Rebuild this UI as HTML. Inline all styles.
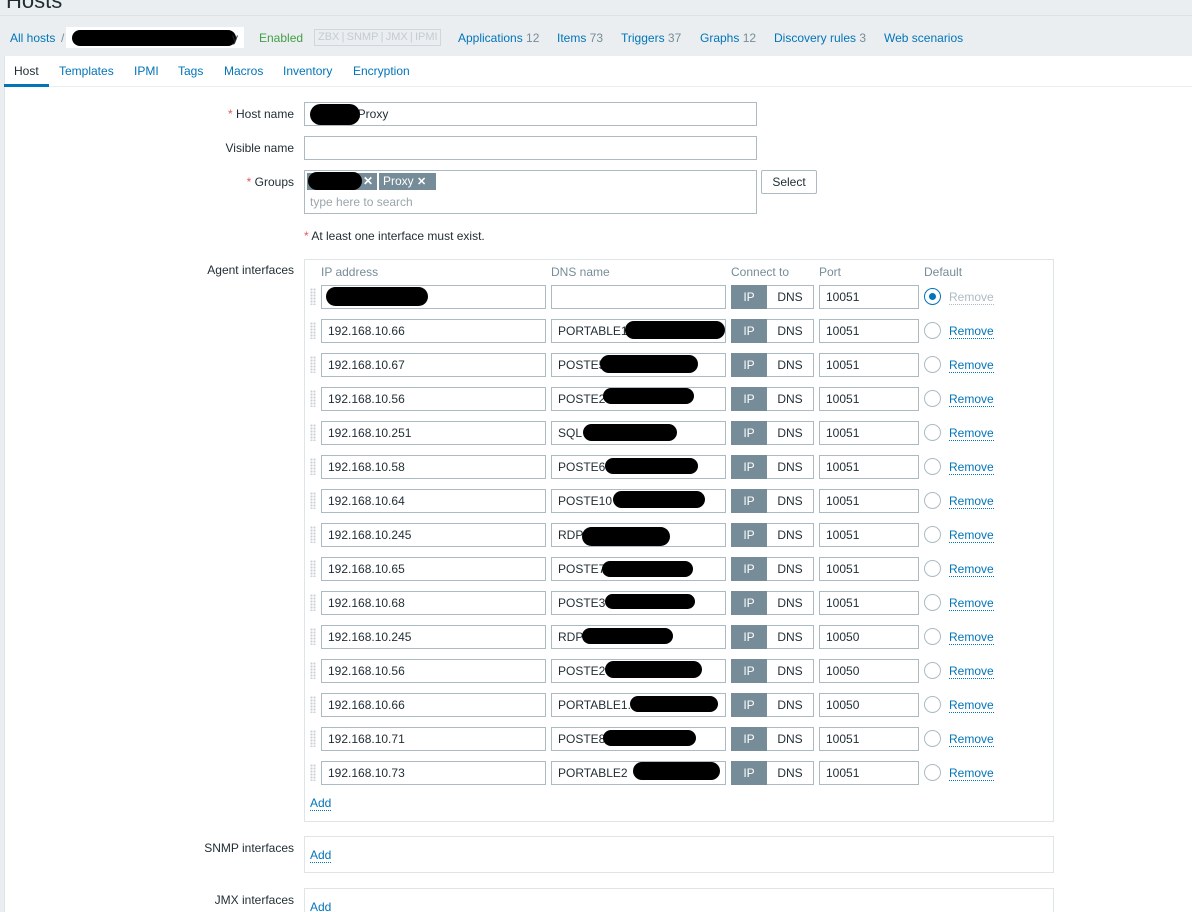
<!DOCTYPE html>
<html style="width:1192px;height:912px;overflow:hidden"><head><meta charset="utf-8"><style>
*{box-sizing:border-box;margin:0;padding:0}
body{width:1192px;height:912px;overflow:hidden;background:#ebeef0;font-family:"Liberation Sans",Arial,sans-serif;font-size:12px;color:#1f2c33;position:relative}
.a{position:absolute;white-space:nowrap}
.lnk{color:#0275b8}
.cnt{color:#768d99}
.in{position:absolute;height:24px;border:1px solid #acbbc2;background:#fff;padding:0 6px;line-height:22px}
.blob{position:absolute;background:#000;border-radius:12px}
.lbl{position:absolute;text-align:right;width:294px;left:0;white-space:nowrap}
.req{color:#e45959}
.tog{position:absolute;height:24px;width:83px;border:1px solid #acbbc2;background:#fff}
.tog .ip{position:absolute;left:-1px;top:-1px;width:36px;height:24px;background:#768d99;color:#fff;text-align:center;line-height:24px}
.tog .dn{position:absolute;left:35px;top:0;width:46px;text-align:center;line-height:22px}
.rad{position:absolute;width:17px;height:17px;border:1px solid #acbbc2;border-radius:50%;background:#fff}
.rm{position:absolute;color:#0275b8;border-bottom:1px dotted #0275b8;line-height:14px}
.drag{position:absolute;width:6px;height:17px;background-image:radial-gradient(circle,#c8d0d5 1px,transparent 1.2px);background-size:3px 3px}
.box{position:absolute;border:1px solid #dfe4e7;background:#fff}
</style></head><body>
<div class="a" style="left:6px;top:-12px;font-size:22px;color:#1f2c33">Hosts</div>
<div class="a" style="left:0;top:15px;width:1192px;height:1px;background:#dde2e5"></div>
<div class="a lnk" style="left:10px;top:31px">All hosts</div>
<div class="a" style="left:61px;top:31px;color:#768d99">/</div>
<div class="a" style="left:66px;top:27px;width:178px;height:21px;background:#fff"></div>
<div class="blob" style="left:72px;top:30px;width:164px;height:16px"></div>
<div class="a" style="left:232px;top:31px">y</div>
<div class="a" style="left:259px;top:31px;color:#429e47">Enabled</div>
<div class="a" style="left:314px;top:29px;width:127px;height:17px;border:1px solid #d0d6d9;color:#c3ccd1;font-size:11px;line-height:15px;padding-left:3px;word-spacing:2px">ZBX&#8201;|&#8201;SNMP&#8201;|&#8201;JMX&#8201;|&#8201;IPMI</div>
<div class="a lnk" style="left:458px;top:31px">Applications <span class="cnt">12</span></div>
<div class="a lnk" style="left:557px;top:31px">Items <span class="cnt">73</span></div>
<div class="a lnk" style="left:621px;top:31px">Triggers <span class="cnt">37</span></div>
<div class="a lnk" style="left:700px;top:31px">Graphs <span class="cnt">12</span></div>
<div class="a lnk" style="left:774px;top:31px">Discovery rules <span class="cnt">3</span></div>
<div class="a lnk" style="left:884px;top:31px">Web scenarios</div>

<div class="a" style="left:4px;top:56px;width:1188px;height:856px;background:#fff;border-left:1px solid #dfe4e7"></div>
<div class="a" style="left:4px;top:86px;width:1188px;height:1px;background:#ebeef0"></div>
<div class="a" style="left:14px;top:64px">Host</div>
<div class="a" style="left:4px;top:84px;width:45px;height:3px;background:#0275b8"></div>
<div class="a lnk" style="left:59px;top:64px">Templates</div>
<div class="a lnk" style="left:134px;top:64px">IPMI</div>
<div class="a lnk" style="left:178px;top:64px">Tags</div>
<div class="a lnk" style="left:224px;top:64px">Macros</div>
<div class="a lnk" style="left:283px;top:64px">Inventory</div>
<div class="a lnk" style="left:353px;top:64px">Encryption</div>

<div class="lbl" style="top:107px"><span class="req">*</span> Host name</div>
<div class="in" style="left:304px;top:102px;width:453px">&nbsp;&nbsp;&nbsp;&nbsp;&nbsp;&nbsp;&nbsp;&nbsp;&nbsp;&nbsp;&nbsp;&nbsp;&nbsp;&nbsp;Proxy</div>
<div class="blob" style="left:310px;top:104px;width:50px;height:21px"></div>
<div class="lbl" style="top:141px">Visible name</div>
<div class="in" style="left:304px;top:136px;width:453px"></div>
<div class="lbl" style="top:175px"><span class="req">*</span> Groups</div>
<div class="in" style="left:304px;top:170px;width:453px;height:44px"></div>
<div class="a" style="left:307px;top:173px;width:70px;height:17px;background:#768d99"></div>
<div class="blob" style="left:308px;top:172px;width:54px;height:18px"></div>
<div class="a" style="left:363px;top:174px;color:#fff;font-weight:bold">✕</div>
<div class="a" style="left:379px;top:173px;width:57px;height:17px;background:#768d99;color:#fff;line-height:17px;padding-left:4px">Proxy <b style="font-size:11px">✕</b></div>
<div class="a" style="left:310px;top:195px;color:#9aa6ac">type here to search</div>
<div class="a" style="left:761px;top:170px;width:56px;height:24px;border:1px solid #acbbc2;border-radius:2px;text-align:center;line-height:22px">Select</div>
<div class="a" style="left:304px;top:229px"><span class="req">*</span> At least one interface must exist.</div>

<div class="lbl" style="top:263px">Agent interfaces</div>
<div class="box" style="left:304px;top:259px;width:750px;height:563px"></div>
<div class="a" style="left:321px;top:265px;color:#768d99">IP address</div>
<div class="a" style="left:551px;top:265px;color:#768d99">DNS name</div>
<div class="a" style="left:731px;top:265px;color:#768d99">Connect to</div>
<div class="a" style="left:819px;top:265px;color:#768d99">Port</div>
<div class="a" style="left:924px;top:265px;color:#768d99">Default</div>

<div class="drag" style="left:310px;top:288px"></div><div class="in" style="left:321px;top:285px;width:225px"></div><div class="blob" style="left:326px;top:287px;width:102px;height:19px"></div><div class="in" style="left:551px;top:285px;width:175px"></div><div class="tog" style="left:731px;top:285px"><div class="ip">IP</div><div class="dn">DNS</div></div><div class="in" style="left:819px;top:285px;width:100px">10051</div><div class="rad" style="left:924px;top:288px;border-color:#0275b8"><div style="position:absolute;left:4px;top:4px;width:7px;height:7px;border-radius:50%;background:#0275b8"></div></div><div class="rm" style="left:949px;top:290px;color:#acbbc2;border-color:#acbbc2">Remove</div>

<div class="drag" style="left:310px;top:322px"></div><div class="in" style="left:321px;top:319px;width:225px">192.168.10.66</div><div class="in" style="left:551px;top:319px;width:175px">PORTABLE1</div><div class="blob" style="left:625px;top:321px;width:100px;height:18px"></div><div class="tog" style="left:731px;top:319px"><div class="ip">IP</div><div class="dn">DNS</div></div><div class="in" style="left:819px;top:319px;width:100px">10051</div><div class="rad" style="left:924px;top:322px"></div><div class="rm" style="left:949px;top:324px">Remove</div>

<div class="drag" style="left:310px;top:356px"></div><div class="in" style="left:321px;top:353px;width:225px">192.168.10.67</div><div class="in" style="left:551px;top:353px;width:175px">POSTE5</div><div class="blob" style="left:600px;top:355px;width:98px;height:18px"></div><div class="tog" style="left:731px;top:353px"><div class="ip">IP</div><div class="dn">DNS</div></div><div class="in" style="left:819px;top:353px;width:100px">10051</div><div class="rad" style="left:924px;top:356px"></div><div class="rm" style="left:949px;top:358px">Remove</div>

<div class="drag" style="left:310px;top:390px"></div><div class="in" style="left:321px;top:387px;width:225px">192.168.10.56</div><div class="in" style="left:551px;top:387px;width:175px">POSTE2</div><div class="blob" style="left:603px;top:388px;width:91px;height:16px"></div><div class="tog" style="left:731px;top:387px"><div class="ip">IP</div><div class="dn">DNS</div></div><div class="in" style="left:819px;top:387px;width:100px">10051</div><div class="rad" style="left:924px;top:390px"></div><div class="rm" style="left:949px;top:392px">Remove</div>

<div class="drag" style="left:310px;top:424px"></div><div class="in" style="left:321px;top:421px;width:225px">192.168.10.251</div><div class="in" style="left:551px;top:421px;width:175px">SQL</div><div class="blob" style="left:583px;top:424px;width:94px;height:17px"></div><div class="tog" style="left:731px;top:421px"><div class="ip">IP</div><div class="dn">DNS</div></div><div class="in" style="left:819px;top:421px;width:100px">10051</div><div class="rad" style="left:924px;top:424px"></div><div class="rm" style="left:949px;top:426px">Remove</div>

<div class="drag" style="left:310px;top:458px"></div><div class="in" style="left:321px;top:455px;width:225px">192.168.10.58</div><div class="in" style="left:551px;top:455px;width:175px">POSTE6</div><div class="blob" style="left:605px;top:458px;width:93px;height:16px"></div><div class="tog" style="left:731px;top:455px"><div class="ip">IP</div><div class="dn">DNS</div></div><div class="in" style="left:819px;top:455px;width:100px">10051</div><div class="rad" style="left:924px;top:458px"></div><div class="rm" style="left:949px;top:460px">Remove</div>

<div class="drag" style="left:310px;top:492px"></div><div class="in" style="left:321px;top:489px;width:225px">192.168.10.64</div><div class="in" style="left:551px;top:489px;width:175px">POSTE10</div><div class="blob" style="left:613px;top:491px;width:92px;height:17px"></div><div class="tog" style="left:731px;top:489px"><div class="ip">IP</div><div class="dn">DNS</div></div><div class="in" style="left:819px;top:489px;width:100px">10051</div><div class="rad" style="left:924px;top:492px"></div><div class="rm" style="left:949px;top:494px">Remove</div>

<div class="drag" style="left:310px;top:526px"></div><div class="in" style="left:321px;top:523px;width:225px">192.168.10.245</div><div class="in" style="left:551px;top:523px;width:175px">RDP</div><div class="blob" style="left:582px;top:527px;width:88px;height:19px"></div><div class="tog" style="left:731px;top:523px"><div class="ip">IP</div><div class="dn">DNS</div></div><div class="in" style="left:819px;top:523px;width:100px">10051</div><div class="rad" style="left:924px;top:526px"></div><div class="rm" style="left:949px;top:528px">Remove</div>

<div class="drag" style="left:310px;top:560px"></div><div class="in" style="left:321px;top:557px;width:225px">192.168.10.65</div><div class="in" style="left:551px;top:557px;width:175px">POSTE7</div><div class="blob" style="left:602px;top:561px;width:91px;height:16px"></div><div class="tog" style="left:731px;top:557px"><div class="ip">IP</div><div class="dn">DNS</div></div><div class="in" style="left:819px;top:557px;width:100px">10051</div><div class="rad" style="left:924px;top:560px"></div><div class="rm" style="left:949px;top:562px">Remove</div>

<div class="drag" style="left:310px;top:594px"></div><div class="in" style="left:321px;top:591px;width:225px">192.168.10.68</div><div class="in" style="left:551px;top:591px;width:175px">POSTE3</div><div class="blob" style="left:605px;top:594px;width:90px;height:15px"></div><div class="tog" style="left:731px;top:591px"><div class="ip">IP</div><div class="dn">DNS</div></div><div class="in" style="left:819px;top:591px;width:100px">10051</div><div class="rad" style="left:924px;top:594px"></div><div class="rm" style="left:949px;top:596px">Remove</div>

<div class="drag" style="left:310px;top:628px"></div><div class="in" style="left:321px;top:625px;width:225px">192.168.10.245</div><div class="in" style="left:551px;top:625px;width:175px">RDP</div><div class="blob" style="left:582px;top:628px;width:91px;height:16px"></div><div class="tog" style="left:731px;top:625px"><div class="ip">IP</div><div class="dn">DNS</div></div><div class="in" style="left:819px;top:625px;width:100px">10050</div><div class="rad" style="left:924px;top:628px"></div><div class="rm" style="left:949px;top:630px">Remove</div>

<div class="drag" style="left:310px;top:662px"></div><div class="in" style="left:321px;top:659px;width:225px">192.168.10.56</div><div class="in" style="left:551px;top:659px;width:175px">POSTE2</div><div class="blob" style="left:605px;top:661px;width:97px;height:17px"></div><div class="tog" style="left:731px;top:659px"><div class="ip">IP</div><div class="dn">DNS</div></div><div class="in" style="left:819px;top:659px;width:100px">10050</div><div class="rad" style="left:924px;top:662px"></div><div class="rm" style="left:949px;top:664px">Remove</div>

<div class="drag" style="left:310px;top:696px"></div><div class="in" style="left:321px;top:693px;width:225px">192.168.10.66</div><div class="in" style="left:551px;top:693px;width:175px">PORTABLE1.</div><div class="blob" style="left:630px;top:696px;width:88px;height:16px"></div><div class="tog" style="left:731px;top:693px"><div class="ip">IP</div><div class="dn">DNS</div></div><div class="in" style="left:819px;top:693px;width:100px">10050</div><div class="rad" style="left:924px;top:696px"></div><div class="rm" style="left:949px;top:698px">Remove</div>

<div class="drag" style="left:310px;top:730px"></div><div class="in" style="left:321px;top:727px;width:225px">192.168.10.71</div><div class="in" style="left:551px;top:727px;width:175px">POSTE8</div><div class="blob" style="left:603px;top:730px;width:93px;height:16px"></div><div class="tog" style="left:731px;top:727px"><div class="ip">IP</div><div class="dn">DNS</div></div><div class="in" style="left:819px;top:727px;width:100px">10051</div><div class="rad" style="left:924px;top:730px"></div><div class="rm" style="left:949px;top:732px">Remove</div>

<div class="drag" style="left:310px;top:764px"></div><div class="in" style="left:321px;top:761px;width:225px">192.168.10.73</div><div class="in" style="left:551px;top:761px;width:175px">PORTABLE2</div><div class="blob" style="left:633px;top:762px;width:87px;height:18px"></div><div class="tog" style="left:731px;top:761px"><div class="ip">IP</div><div class="dn">DNS</div></div><div class="in" style="left:819px;top:761px;width:100px">10051</div><div class="rad" style="left:924px;top:764px"></div><div class="rm" style="left:949px;top:766px">Remove</div>

<div class="rm" style="left:310px;top:796px">Add</div>

<div class="lbl" style="top:841px">SNMP interfaces</div>
<div class="box" style="left:304px;top:836px;width:750px;height:37px"></div>
<div class="rm" style="left:310px;top:848px">Add</div>
<div class="lbl" style="top:893px">JMX interfaces</div>
<div class="box" style="left:304px;top:888px;width:750px;height:40px"></div>
<div class="rm" style="left:310px;top:900px">Add</div>
</body></html>
